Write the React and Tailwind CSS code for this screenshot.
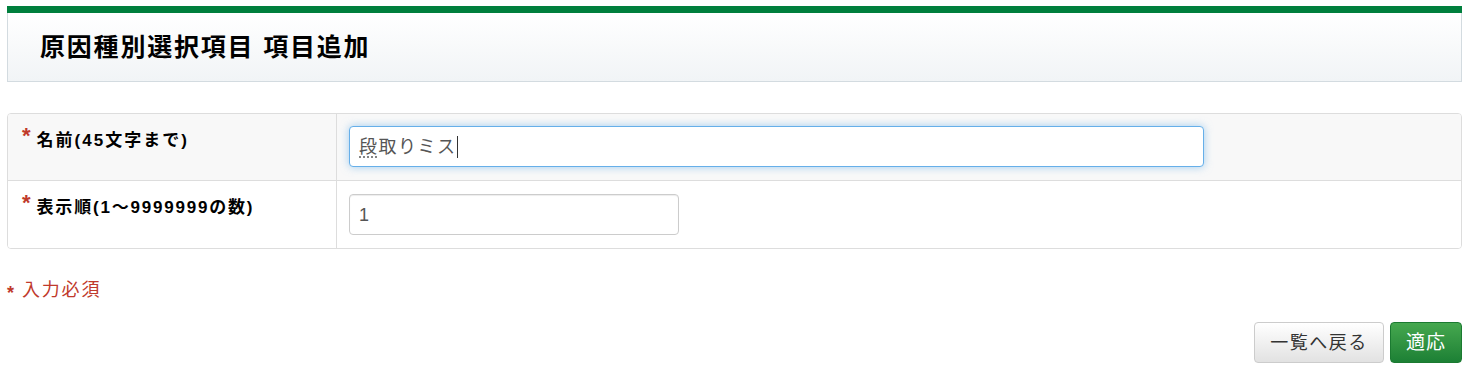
import React from "react";

const F = { fontFamily: '"Liberation Sans", "Noto Sans CJK JP", sans-serif' };

export default function App() {
  return (
    <div className="w-[1469px] h-[372px] bg-white px-[7px] pt-[6px] overflow-hidden" style={F}>
      <div className="h-[7px] bg-[#007f3d]" />
      <div className="h-[69px] border border-t-0 border-[#d3dbe0] bg-gradient-to-b from-white to-[#f1f4f6] pl-[32px] flex items-center">
        <h1 className="text-[25px] font-bold tracking-[1.8px] text-black leading-none">原因種別選択項目 項目追加</h1>
      </div>

      <div className="mt-[31px] border border-[#dddddd] rounded-[4px] overflow-hidden">
        <div className="grid grid-cols-[329px_1fr] bg-[#f8f8f8] border-b border-[#dddddd] h-[67px]">
          <div className="border-r border-[#dddddd] pl-[14px] pt-[11px] flex items-start">
            <span className="text-[#c0392b] text-[22px] leading-none font-bold mr-[6px]">*</span>
            <span className="text-[17px] font-bold tracking-[2px] text-black leading-[22px] pt-[5px]">名前(45文字まで)</span>
          </div>
          <div className="pl-[12px] pt-[12px]">
            <div className="w-[855px] h-[41px] bg-white border border-[#66afe9] rounded-[4px] shadow-[0_0_8px_rgba(102,175,233,0.6)] flex items-center pl-[9px]">
              <span className="text-[18px] tracking-[1.5px] text-[#555] leading-none underline decoration-dotted decoration-[#777] underline-offset-[4px] [text-decoration-skip-ink:none]">段</span>
              <span className="text-[18px] tracking-[1.5px] text-[#555] leading-none">取りミス</span>
              <span className="w-px h-[22px] bg-[#333]" />
            </div>
          </div>
        </div>
        <div className="grid grid-cols-[329px_1fr] bg-white h-[67px]">
          <div className="border-r border-[#dddddd] pl-[14px] pt-[11px] flex items-start">
            <span className="text-[#c0392b] text-[22px] leading-none font-bold mr-[6px]">*</span>
            <span className="text-[17px] font-bold tracking-[1.8px] text-black leading-[22px] pt-[5px]">表示順(1〜9999999の数)</span>
          </div>
          <div className="pl-[12px] pt-[13px]">
            <div className="w-[330px] h-[41px] bg-white border border-[#cccccc] rounded-[4px] shadow-[inset_0_1px_1px_rgba(0,0,0,0.075)] flex items-center pl-[9px]">
              <span className="text-[18px] text-[#555] leading-none">1</span>
            </div>
          </div>
        </div>
      </div>

      <div className="mt-[28px] flex items-center text-[#c0392b]">
        <span className="text-[18px] leading-none pt-[6px] mr-[8px] font-bold">*</span>
        <span className="text-[18px] tracking-[1.8px] leading-[26px]">入力必須</span>
      </div>

      <div className="mt-[19px] flex justify-end gap-[6px]">
        <button className="w-[130px] h-[41px] rounded-[4px] border border-[#cccccc] bg-gradient-to-b from-white to-[#e2e2e2] text-[18px] tracking-[1.5px] text-[#333] leading-none" style={F}>一覧へ戻る</button>
        <button className="w-[72px] h-[41px] rounded-[4px] border border-[#1b7a31] bg-gradient-to-b from-[#45a84f] to-[#1c8035] text-[19px] tracking-[1px] text-white leading-none" style={F}>適応</button>
      </div>
    </div>
  );
}
